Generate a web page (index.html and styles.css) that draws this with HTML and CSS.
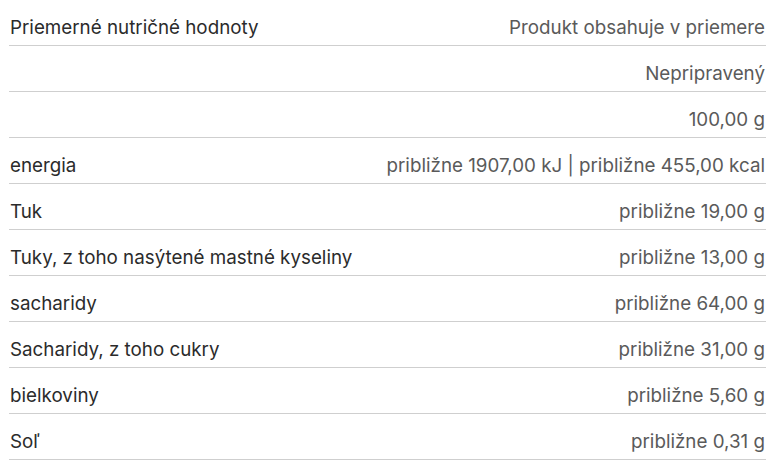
FILE: index.html
```html
<!DOCTYPE html>
<html lang="sk">
<head>
<meta charset="utf-8">
<title>Priemerné nutričné hodnoty</title>
<link rel="stylesheet" href="styles.css">
</head>
<body>
<table class="nutri">
  <thead>
    <tr><th class="label">Priemerné nutričné hodnoty</th><th class="value">Produkt obsahuje v priemere</th></tr>
  </thead>
  <tbody>
    <tr><td class="label"></td><td class="value">Nepripravený</td></tr>
    <tr><td class="label"></td><td class="value">100,00 g</td></tr>
    <tr><td class="label">energia</td><td class="value">približne 1907,00 kJ | približne 455,00 kcal</td></tr>
    <tr><td class="label">Tuk</td><td class="value">približne 19,00 g</td></tr>
    <tr><td class="label">Tuky, z toho nasýtené mastné kyseliny</td><td class="value">približne 13,00 g</td></tr>
    <tr><td class="label">sacharidy</td><td class="value">približne 64,00 g</td></tr>
    <tr><td class="label">Sacharidy, z toho cukry</td><td class="value">približne 31,00 g</td></tr>
    <tr><td class="label">bielkoviny</td><td class="value">približne 5,60 g</td></tr>
    <tr><td class="label">Soľ</td><td class="value">približne 0,31 g</td></tr>
  </tbody>
</table>
</body>
</html>
```
FILE: styles.css
```css
html, body {
  margin: 0;
  padding: 0;
  background: #ffffff;
}
body {
  padding: 0 7px 0 9px;
  font-family: "Inter", "Noto Sans", sans-serif;
  font-size: 18.8px;
}
.nutri {
  width: 100%;
  border-collapse: collapse;
}
.nutri th,
.nutri td {
  height: 46px;
  padding: 0 1px 6px;
  border-bottom: 1px solid #cfcfcf;
  font-weight: 400;
  vertical-align: bottom;
  box-sizing: border-box;
  line-height: 22px;
  white-space: nowrap;
}
.nutri th {
  height: 45px;
}
.nutri .label {
  text-align: left;
  color: #2b2b2b;
}
.nutri .value {
  text-align: right;
  color: #5a5a5a;
}
```
